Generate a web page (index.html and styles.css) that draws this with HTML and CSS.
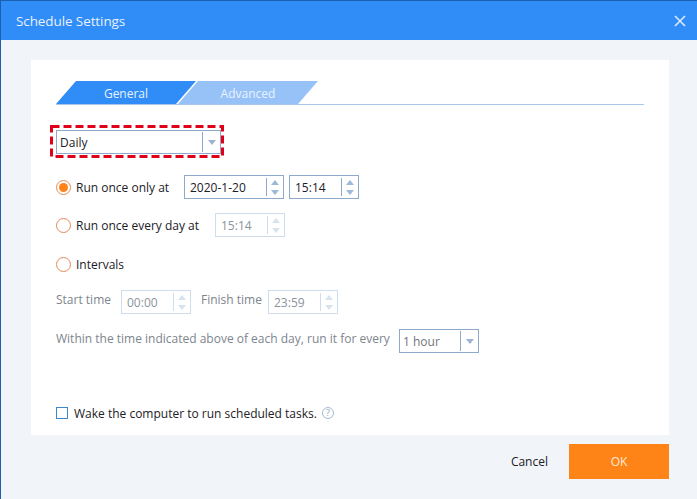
FILE: index.html
```html
<!DOCTYPE html>
<html lang="en">
<head>
<meta charset="utf-8">
<title>Schedule Settings</title>
<link rel="stylesheet" href="styles.css">
</head>
<body>
<div class="app">
  <header class="titlebar">
    <span class="title">Schedule Settings</span>
    <svg class="close" width="12" height="12" viewBox="0 0 12 12"><path d="M1 1L11 11M11 1L1 11" stroke="#d6e9ff" stroke-width="1.7" fill="none"/></svg>
  </header>
  <main class="card">
    <div class="tabs">
      <div class="tab tab-active">General</div>
      <div class="tab tab-idle">Advanced</div>
    </div>
    <div class="highlight">
      <svg class="dashes" width="174" height="33" viewBox="0 0 174 33"><rect x="1.5" y="1.5" width="171" height="30" fill="none" stroke="#e0001a" stroke-width="3" stroke-dasharray="8 4"/></svg>
      <div class="select select-wide"><span class="select-text">Daily</span><span class="select-btn"></span></div>
    </div>
    <div class="rows">
      <div class="row">
        <span class="radio radio-on"></span>
        <span class="label label-a">Run once only at</span>
        <div class="spin spin-date"><span class="spin-text">2020-1-20</span><span class="spin-btn"></span></div>
        <div class="spin spin-time spin-next"><span class="spin-text">15:14</span><span class="spin-btn"></span></div>
      </div>
      <div class="row">
        <span class="radio"></span>
        <span class="label label-b">Run once every day at</span>
        <div class="spin spin-time off"><span class="spin-text">15:14</span><span class="spin-btn"></span></div>
      </div>
      <div class="row row-tall">
        <span class="radio"></span>
        <span class="label">Intervals</span>
      </div>
      <div class="row">
        <span class="muted muted-start">Start time</span>
        <div class="spin spin-time off"><span class="spin-text">00:00</span><span class="spin-btn"></span></div>
        <span class="muted muted-finish">Finish time</span>
        <div class="spin spin-time off"><span class="spin-text">23:59</span><span class="spin-btn"></span></div>
      </div>
      <div class="row row-tall">
        <span class="muted muted-within">Within the time indicated above of each day, run it for every</span>
        <div class="select select-small"><span class="select-text soft">1 hour</span><span class="select-btn"></span></div>
      </div>
    </div>
    <div class="wake">
      <span class="checkbox"></span>
      <span class="label">Wake the computer to run scheduled tasks.</span>
      <span class="help">?</span>
    </div>
  </main>
  <footer class="footer">
    <span class="cancel">Cancel</span>
    <button class="ok">OK</button>
  </footer>
</div>
</body>
</html>
```
FILE: styles.css
```css
* { box-sizing: border-box; }
html, body { margin: 0; height: 100%; }
body {
  font-family: "Open Sans", "Noto Sans", "Liberation Sans", sans-serif;
  font-size: 12px;
  color: #1c2026;
  background: #f1f5fa;
  overflow: hidden;
}
.app {
  width: 697px;
  height: 499px;
  border-left: 1px solid #1a5fb0;
  border-top: 1px solid #1a5fb0;
  display: flex;
  flex-direction: column;
}
.titlebar {
  height: 39px;
  flex: none;
  background: #308cf7;
  display: flex;
  align-items: center;
  justify-content: space-between;
  padding: 0 11px 0 15px;
}
.title { color: #e6f1ff; font-size: 13.5px; letter-spacing: -0.1px; }
.close { display: block; }
.card {
  width: 638px;
  height: 375px;
  margin: 20px 0 0 30px;
  padding: 21px 25px 15px;
  background: #fff;
  display: flex;
  flex-direction: column;
  flex: none;
}
.tabs {
  display: flex;
  height: 24px;
  border-bottom: 1px solid #a9c8ee;
}
.tab {
  width: 140px;
  height: 23px;
  padding-top: 1px;
  display: flex;
  align-items: center;
  justify-content: center;
  color: #e8f2ff;
  clip-path: polygon(20px 0, 100% 0, 120px 100%, 0 100%);
}
.tab-active { background: #308cf7; }
.tab-idle { background: #97c2f8; margin-left: -18px; }
.highlight {
  position: relative;
  width: 174px;
  height: 33px;
  margin: 20px 0 0 -6px;
  padding: 5px 0 0 6px;
}
.dashes { position: absolute; left: 0; top: 0; }
.select {
  height: 24px;
  background: #fff;
  border: 1px solid #8fa9ca;
  display: flex;
  align-items: center;
  justify-content: space-between;
}
.select-wide { width: 165px; }
.select-small { width: 80px; }
.select-text { padding-left: 3px; }
.soft { color: #6f767e; }
.select-btn {
  width: 18px;
  height: 20px;
  border-left: 1px solid #8fa9ca;
  display: flex;
  align-items: center;
  justify-content: center;
}
.select-btn::before {
  content: "";
  border-left: 4px solid transparent;
  border-right: 4px solid transparent;
  border-top: 5px solid #9db3d0;
}
.rows {
  display: flex;
  flex-direction: column;
  gap: 14px;
  margin-top: 17px;
}
.row {
  display: flex;
  align-items: center;
  height: 24px;
}
.row-tall { margin-top: 1px; }
.radio {
  width: 15px;
  height: 15px;
  border-radius: 50%;
  border: 1px solid #e58a5a;
  margin-right: 5px;
  flex: none;
  display: flex;
  align-items: center;
  justify-content: center;
}
.radio-on::before {
  content: "";
  width: 9px;
  height: 9px;
  border-radius: 50%;
  background: #ff8417;
}
.label-a { width: 108px; }
.label-b { width: 139px; }
.spin {
  height: 24px;
  border: 1px solid #8fa9ca;
  background: #fff;
  display: flex;
  align-items: center;
  justify-content: space-between;
  padding: 0 0 0 5px;
}
.spin-date { width: 100px; }
.spin-time { width: 70px; }
.spin-next { margin-left: 5px; }
.spin-btn {
  width: 17px;
  height: 18px;
  border-left: 1px solid #8fa9ca;
  display: flex;
  flex-direction: column;
  align-items: center;
  justify-content: center;
  gap: 5px;
}
.spin-btn::before,
.spin-btn::after {
  content: "";
  border-left: 4px solid transparent;
  border-right: 4px solid transparent;
}
.spin-btn::before { border-bottom: 5px solid #9db8d8; }
.spin-btn::after { border-top: 5px solid #9db8d8; }
.off { border-color: #cfdcec; color: #8b939c; }
.off .spin-btn { border-left-color: #cfdcec; }
.off .spin-btn::before { border-bottom-color: #d8e3f0; }
.off .spin-btn::after { border-top-color: #d8e3f0; }
.muted {
  color: #7d858e;
  padding-bottom: 6px;
}
.muted-start { width: 65px; }
.muted-finish { width: 67px; margin-left: 10px; }
.muted-within { width: 343px; }
.wake {
  margin-top: auto;
  display: flex;
  align-items: center;
  height: 14px;
}
.checkbox {
  width: 12px;
  height: 12px;
  border: 1px solid #3f86c8;
  margin-right: 6px;
  flex: none;
}
.help {
  width: 12px;
  height: 12px;
  margin-left: 5px;
  border-radius: 50%;
  border: 1px solid #a3bad2;
  color: #8ea5bd;
  font-size: 9px;
  line-height: 10px;
  text-align: center;
}
.footer {
  display: flex;
  justify-content: flex-end;
  align-items: center;
  width: 668px;
  margin-top: 9px;
  gap: 21px;
}
.cancel { color: #1c2026; }
.ok {
  width: 100px;
  height: 35px;
  border: 0;
  padding: 0;
  background: #ff8417;
  color: #ffe9d6;
  font: inherit;
}
```
